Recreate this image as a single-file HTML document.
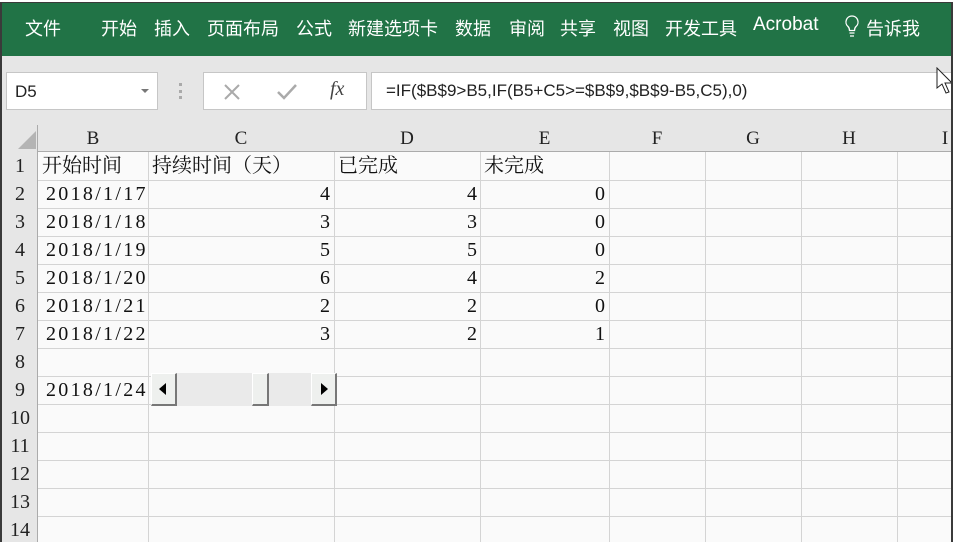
<!DOCTYPE html><html><head><meta charset="utf-8"><style>
*{margin:0;padding:0;box-sizing:border-box}
body{width:955px;height:540px;overflow:hidden;background:#fff;position:relative;font-family:"Liberation Serif","Noto Serif CJK SC",serif}
.abs{position:absolute}
#win{left:0;top:2px;width:953px;height:540px;border-left:2px solid #3a3a3a;border-right:2px solid #3a3a3a;border-top:1px solid #3a3a3a;background:#e6e6e6;overflow:hidden}
#rib{left:0;top:0;width:100%;height:53px;background:#217346;color:#fff;font-family:"Liberation Sans","Noto Sans CJK SC",sans-serif;font-size:18px}
#rib span{position:absolute;top:12px;white-space:nowrap}
.box{background:#fff;border:1px solid #c6c6c6}
.cell{font-size:19px;color:#111;white-space:nowrap;line-height:28px}
</style></head><body>
<div id="win" class="abs">
<div id="rib" class="abs">
<span style="left:23px">文件</span><span style="left:99px">开始</span><span style="left:152px">插入</span><span style="left:205px">页面布局</span><span style="left:294px">公式</span><span style="left:346px">新建选项卡</span><span style="left:453px">数据</span><span style="left:507px">审阅</span><span style="left:558px">共享</span><span style="left:611px">视图</span><span style="left:663px">开发工具</span><span style="left:751px;top:11px;font-size:19px">Acrobat</span>
<svg class="abs" style="left:842px;top:11px" width="16" height="26"><path d="M8 2a6 6 0 0 0-4 10.5c1 1 1.5 2 1.5 4h5c0-2 .5-3 1.5-4A6 6 0 0 0 8 2z M5.5 19h5 M6 22h4" fill="none" stroke="#fff" stroke-width="1.3"/></svg>
<span style="left:864px">告诉我</span>
</div>
<div class="abs box" style="left:4px;top:69px;width:152px;height:38px;font-family:'Liberation Sans',sans-serif;font-size:17px;padding:9px 0 0 8px;color:#222">D5<span style="position:absolute;right:8px;top:16px;border:4px solid transparent;border-top:4px solid #777"></span></div>
<div class="abs" style="left:177px;top:80px;width:3px;height:16px;border-left:3px dotted #aaa"></div>
<div class="abs box" style="left:201px;top:69px;width:164px;height:38px;color:#aaa;font-size:22px">
<svg class="abs" style="left:19px;top:10px" width="18" height="18"><path d="M2 2L16 16M16 2L2 16" stroke="#aaa" stroke-width="2"/></svg>
<svg class="abs" style="left:72px;top:10px" width="22" height="18"><path d="M2 9L8 15L20 2" fill="none" stroke="#aaa" stroke-width="2.5"/></svg>
<span class="abs" style="left:126px;top:5px;color:#444;font-style:italic;font-size:20px">fx</span></div>
<div class="abs box" style="left:369px;top:69px;width:590px;height:38px;font-family:'Liberation Sans',sans-serif;font-size:17px;padding:8px 0 0 14px;color:#222">=IF($B$9&gt;B5,IF(B5+C5&gt;=$B$9,$B$9-B5,C5),0)</div>
<svg class="abs" style="left:934px;top:64px" width="18" height="28"><path d="M1 1L1 21L6 17L10 26L13 25L9 16L16 16Z" fill="#fff" stroke="#222" stroke-width="1"/></svg>
<div class="abs" style="left:0;top:122px;width:100%;height:420px;background:#fafafa"></div>
<svg class="abs" style="left:0;top:122px" width="960" height="420">
<g stroke="#d4d4d4" stroke-width="1">
<line x1="146.5" y1="27" x2="146.5" y2="420"/><line x1="332.5" y1="27" x2="332.5" y2="420"/><line x1="478.5" y1="27" x2="478.5" y2="420"/><line x1="607.5" y1="27" x2="607.5" y2="420"/><line x1="703.5" y1="27" x2="703.5" y2="420"/><line x1="799.5" y1="27" x2="799.5" y2="420"/><line x1="895.5" y1="27" x2="895.5" y2="420"/>
<line x1="36" y1="55.5" x2="960" y2="55.5"/><line x1="36" y1="83.5" x2="960" y2="83.5"/><line x1="36" y1="111.5" x2="960" y2="111.5"/><line x1="36" y1="139.5" x2="960" y2="139.5"/><line x1="36" y1="167.5" x2="960" y2="167.5"/><line x1="36" y1="195.5" x2="960" y2="195.5"/><line x1="36" y1="223.5" x2="960" y2="223.5"/><line x1="36" y1="251.5" x2="960" y2="251.5"/><line x1="36" y1="279.5" x2="960" y2="279.5"/><line x1="36" y1="307.5" x2="960" y2="307.5"/><line x1="36" y1="335.5" x2="960" y2="335.5"/><line x1="36" y1="363.5" x2="960" y2="363.5"/><line x1="36" y1="391.5" x2="960" y2="391.5"/>
</g></svg>
<div class="abs" style="left:0;top:122px;width:100%;height:27px;background:#e6e6e6;border-bottom:1px solid #ababab"></div>
<div class="abs" style="left:0;top:122px;width:36px;height:420px;background:#e6e6e6;border-right:1px solid #ababab"></div>
<svg class="abs" style="left:14px;top:126px" width="20" height="20"><polygon points="20,2 20,20 2,20" fill="#b4b4b4"/></svg>
<div class="abs" style="left:36px;top:122px;font-size:19px;line-height:27px;color:#222">
<span class="abs" style="left:0;width:110px;text-align:center">B</span><span class="abs" style="left:110px;width:186px;text-align:center">C</span><span class="abs" style="left:296px;width:146px;text-align:center">D</span><span class="abs" style="left:442px;width:129px;text-align:center">E</span><span class="abs" style="left:571px;width:96px;text-align:center">F</span><span class="abs" style="left:667px;width:96px;text-align:center">G</span><span class="abs" style="left:763px;width:96px;text-align:center">H</span><span class="abs" style="left:859px;width:96px;text-align:center">I</span>
</div>
<div class="abs" style="left:0;top:149px;width:36px;font-size:20px;line-height:28px;color:#222;text-align:center">
<div>1</div><div>2</div><div>3</div><div>4</div><div>5</div><div>6</div><div>7</div><div>8</div><div>9</div><div>10</div><div>11</div><div>12</div><div>13</div><div>14</div></div>
<div class="abs cell" style="left:40px;top:149px;line-height:28px;font-size:20px">开始时间</div>
<div class="abs cell" style="left:44px;top:177px;line-height:28px;font-size:20px;letter-spacing:2.3px">2018/1/17<br>2018/1/18<br>2018/1/19<br>2018/1/20<br>2018/1/21<br>2018/1/22<br><br>2018/1/24</div>
<div class="abs cell" style="left:150px;top:149px;font-size:20px">持续时间（天）</div>
<div class="abs cell" style="left:336px;top:149px;font-size:20px">已完成</div>
<div class="abs cell" style="left:482px;top:149px;font-size:20px">未完成</div>
<div class="abs cell" style="left:150px;top:177px;width:178px;text-align:right;font-size:20px">4<br>3<br>5<br>6<br>2<br>3</div>
<div class="abs cell" style="left:336px;top:177px;width:139px;text-align:right;font-size:20px">4<br>3<br>5<br>4<br>2<br>2</div>
<div class="abs cell" style="left:482px;top:177px;width:121px;text-align:right;font-size:20px">0<br>0<br>0<br>2<br>0<br>1</div>
<div class="abs" style="left:149px;top:370px;width:185px;height:33px;background:#eaeaea"></div>
<div class="abs" style="left:149px;top:370px;width:26px;height:33px;background:#eef0ee;border:1px solid #fff;border-right:2px solid #777;border-bottom:2px solid #777"><svg class="abs" style="left:7px;top:9px" width="8" height="12"><polygon points="7,0 7,12 0,6" fill="#000"/></svg></div>
<div class="abs" style="left:250px;top:370px;width:17px;height:33px;background:#eef0ee;border:1px solid #fff;border-right:2px solid #777;border-bottom:2px solid #777"></div>
<div class="abs" style="left:309px;top:370px;width:26px;height:33px;background:#eef0ee;border:1px solid #fff;border-right:2px solid #777;border-bottom:2px solid #777"><svg class="abs" style="left:9px;top:9px" width="8" height="12"><polygon points="0,0 0,12 7,6" fill="#000"/></svg></div>
</div>
</body></html>
